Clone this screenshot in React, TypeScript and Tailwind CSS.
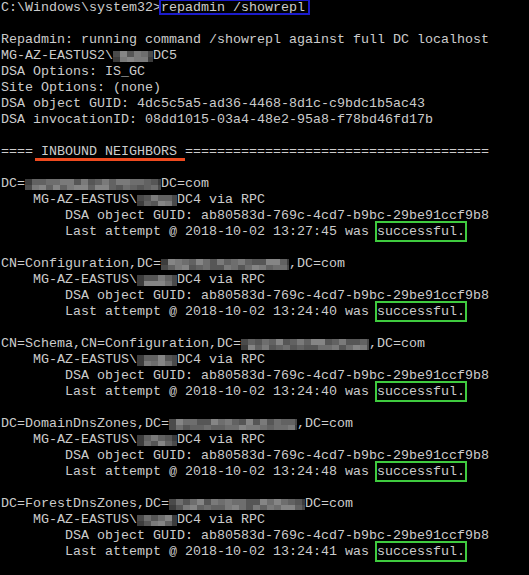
import React from "react";

const SHADES = [
  "bg-[#3c3c3c]",
  "bg-[#4a4a4a]",
  "bg-[#565656]",
  "bg-[#626262]",
  "bg-[#6e6e6e]",
  "bg-[#7a7a7a]",
  "bg-[#858585]",
];

function Redact({ n, seed }: { n: number; seed: number }) {
  const w = n * 8;
  const cols = Math.ceil(w / 7);
  let s = seed * 9301 + 49297;
  const rnd = () => {
    s = (s * 9301 + 49297) % 233280;
    return s / 233280;
  };
  const columns = Array.from({ length: cols }, (_, i) => {
    const edge = i === 0 || i === cols - 1;
    const a = edge ? Math.floor(rnd() * 2) : 2 + Math.floor(rnd() * 5);
    const b = edge ? Math.floor(rnd() * 2) : 2 + Math.floor(rnd() * 5);
    return [a, b];
  });
  return (
    <span
      className="inline-flex h-[16px] align-top items-center overflow-hidden"
      style={{ width: w }}
    >
      <span className="flex w-full">
        {columns.map(([a, b], i) => (
          <span key={i} className="flex flex-col w-[7px] shrink-0">
            <span className={`h-[6px] ${SHADES[a]}`} />
            <span className={`h-[5px] ${SHADES[b]}`} />
          </span>
        ))}
      </span>
    </span>
  );
}

function Success() {
  return (
    <span className="relative">
      successful.
      <span className="absolute left-[-2px] right-[-2px] top-[-3px] bottom-[-3px] border-2 border-[#3fcb3f]" />
    </span>
  );
}

const blocks: { prefix: string; n: number; comma: boolean; time: string }[] = [
  { prefix: "DC=", n: 17, comma: false, time: "13:27:45" },
  { prefix: "CN=Configuration,DC=", n: 16, comma: true, time: "13:24:40" },
  { prefix: "CN=Schema,CN=Configuration,DC=", n: 16, comma: true, time: "13:24:40" },
  { prefix: "DC=DomainDnsZones,DC=", n: 16, comma: true, time: "13:24:48" },
  { prefix: "DC=ForestDnsZones,DC=", n: 17, comma: false, time: "13:24:41" },
];

export default function App() {
  return (
    <div
      className="w-full min-h-[575px] bg-black text-[#cccccc] text-[13.333px] leading-[16px] whitespace-pre overflow-hidden"
      style={{ fontFamily: '"Liberation Mono", "DejaVu Sans Mono", monospace' }}
    >
      <div className="pl-[1px]">
        <div className="h-[16px]">
          C:\Windows\system32&gt;
          <span className="relative">
            repadmin /showrepl
            <span className="absolute left-[-2px] right-[-5px] top-[-1px] bottom-[0px] border-2 border-[#1c1ccc]" />
          </span>
        </div>
        <div className="h-[16px]" />
        <div className="h-[16px]">Repadmin: running command /showrepl against full DC localhost</div>
        <div className="h-[16px]">
          MG-AZ-EASTUS2\
          <Redact n={5} seed={1} />
          DC5
        </div>
        <div className="h-[16px]">DSA Options: IS_GC</div>
        <div className="h-[16px]">Site Options: (none)</div>
        <div className="h-[16px]">DSA object GUID: 4dc5c5a5-ad36-4468-8d1c-c9bdc1b5ac43</div>
        <div className="h-[16px]">DSA invocationID: 08dd1015-03a4-48e2-95a8-f78bd46fd17b</div>
        <div className="h-[16px]" />
        <div className="h-[16px]">
          {"==== "}
          <span className="relative">
            INBOUND NEIGHBORS
            <span className="absolute left-[-6px] right-[-8px] top-[14px] h-[3px] bg-[#ee4a1f]" />
          </span>
          {" ======================================"}
        </div>
        <div className="h-[16px]" />
        {blocks.map((b, i) => (
          <div key={i}>
            <div className="h-[16px]">
              {b.prefix}
              <Redact n={b.n} seed={i * 7 + 3} />
              {b.comma ? ",DC=com" : "DC=com"}
            </div>
            <div className="h-[16px]">
              {"    MG-AZ-EASTUS\\"}
              <Redact n={5} seed={i * 5 + 11} />
              DC4 via RPC
            </div>
            <div className="h-[16px]">{"        DSA object GUID: ab80583d-769c-4cd7-b9bc-29be91ccf9b8"}</div>
            <div className="h-[16px]">
              {"        Last attempt @ 2018-10-02 " + b.time + " was "}
              <Success />
            </div>
            <div className="h-[16px]" />
          </div>
        ))}
      </div>
    </div>
  );
}
